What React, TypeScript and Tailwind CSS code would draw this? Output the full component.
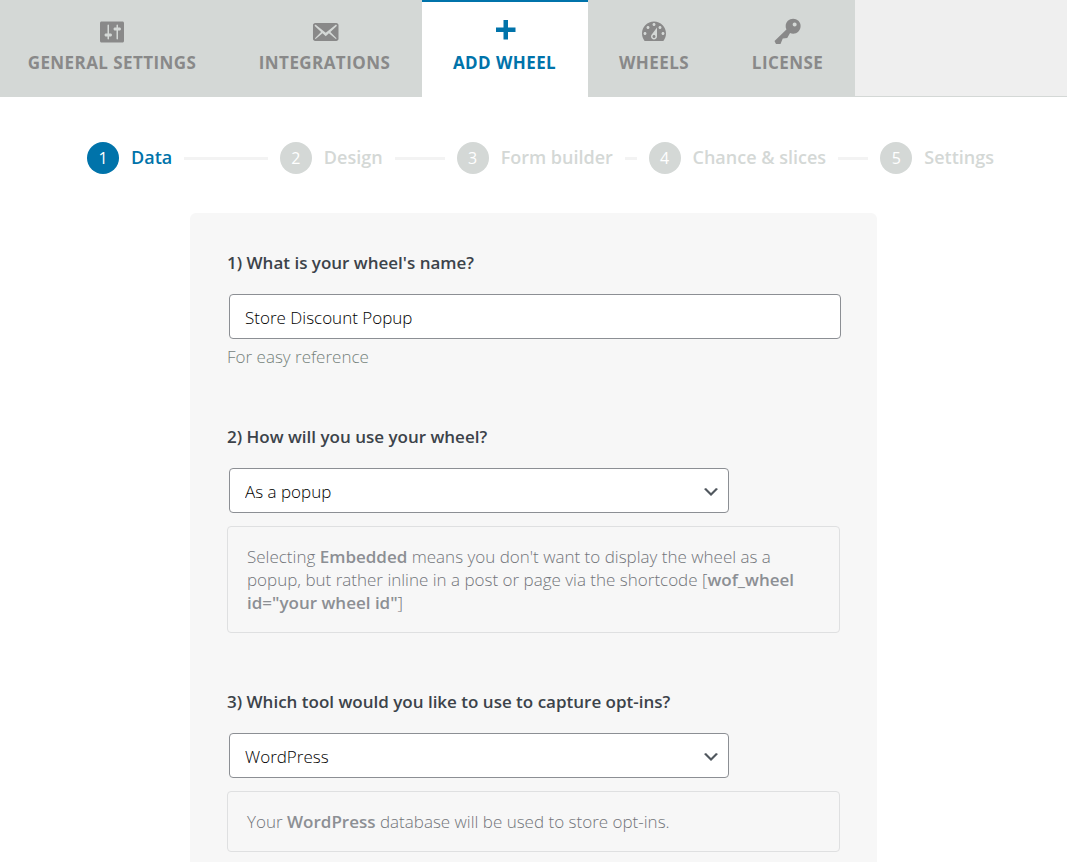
import React, { useState } from 'react';

const icons = {
  settings: 'M18 16V4c0-.55-.45-1-1-1H3c-.55 0-1 .45-1 1v12c0 .55.45 1 1 1h14c.55 0 1-.45 1-1zM8 11h1c.55 0 1 .45 1 1s-.45 1-1 1H8v1.5c0 .28-.22.5-.5.5s-.5-.22-.5-.5V13H6c-.55 0-1-.45-1-1s.45-1 1-1h1V5.5c0-.28.22-.5.5-.5s.5.22.5.5V11zm5-2h-1c-.55 0-1-.45-1-1s.45-1 1-1h1V5.5c0-.28.22-.5.5-.5s.5.22.5.5V7h1c.55 0 1 .45 1 1s-.45 1-1 1h-1v5.5c0 .28-.22.5-.5.5s-.5-.22-.5-.5V9z',
  email: 'M19 14.5v-9c0-.83-.67-1.5-1.5-1.5H3.49c-.83 0-1.5.67-1.5 1.5v9c0 .83.67 1.5 1.5 1.5H17.5c.83 0 1.5-.67 1.5-1.5zm-1.31-9.11c.33.33.15.67-.03.84L13.6 9.95l3.9 4.06c.12.14.2.36.06.51-.13.16-.43.15-.56.05l-4.37-3.73-2.14 1.95-2.13-1.95-4.37 3.73c-.13.1-.43.11-.56-.05-.14-.15-.06-.37.06-.51l3.9-4.06-4.06-3.72c-.18-.17-.36-.51-.03-.84s.67-.17.95.07l6.24 5.04 6.25-5.04c.28-.24.62-.4.95-.07z',
  plus: 'M17 7v3h-5v5H9v-5H4V7h5V2h3v5h5z',
  dashboard: 'M3.76 16h12.48c1.1-1.37 1.76-3.11 1.76-5 0-4.42-3.58-8-8-8s-8 3.58-8 8c0 1.89.66 3.63 1.76 5zM10 4c.55 0 1 .45 1 1s-.45 1-1 1-1-.45-1-1 .45-1 1-1zM6 6c.55 0 1 .45 1 1s-.45 1-1 1-1-.45-1-1 .45-1 1-1zm8 0c.55 0 1 .45 1 1s-.45 1-1 1-1-.45-1-1 .45-1 1-1zm-5.37 5.55L12 7v6c0 1.1-.9 2-2 2s-2-.9-2-2c0-.57.24-1.08.63-1.45zM4 10c.55 0 1 .45 1 1s-.45 1-1 1-1-.45-1-1 .45-1 1-1zm12 0c.55 0 1 .45 1 1s-.45 1-1 1-1-.45-1-1 .45-1 1-1zm-5 3c0-.55-.45-1-1-1s-1 .45-1 1 .45 1 1 1 1-.45 1-1z',
  key: 'M16.95 2.58c1.96 1.95 1.96 5.12 0 7.07-1.51 1.51-3.75 1.84-5.59 1.01l-1.87 3.31-2.99.31L5 18H2l-1-2 7.95-7.69c-.92-1.87-.62-4.18.93-5.73 1.96-1.96 5.12-1.96 7.07 0zm-2.51 3.79c.74 0 1.33-.6 1.33-1.34 0-.73-.59-1.33-1.33-1.33-.73 0-1.33.6-1.33 1.33 0 .74.6 1.34 1.33 1.34z',
};

const tabs = [
  { label: 'General Settings', icon: icons.settings, width: 'w-[228px] pr-1' },
  { label: 'Integrations', icon: icons.email, width: 'w-[194px] pr-px' },
  { label: 'Add Wheel', icon: icons.plus, width: 'w-[166px] pr-px', active: true },
  { label: 'Wheels', icon: icons.dashboard, width: 'w-[133px] pr-px' },
  { label: 'License', icon: icons.key, width: 'w-[134px] pr-px' },
];

const steps = ['Data', 'Design', 'Form builder', 'Chance & slices', 'Settings'];

const TabBar: React.FC = () => (
  <nav className="flex border-b border-[#d4d8d6] bg-[#efefef]">
    {tabs.map(tab => (
      <a
        key={tab.label}
        href="#"
        className={`-mb-px flex h-[97px] shrink-0 flex-col items-center border-t-2 pt-[15px] text-[17px] font-bold uppercase tracking-wide ${tab.width} ${
          tab.active ? 'border-[#0073aa] bg-white text-[#0073aa]' : 'border-[#d4d8d6] bg-[#d4d8d6] text-[#898989]'
        }`}
      >
        <svg viewBox="0 0 20 20" className="size-[30px]" fill="currentColor" aria-hidden="true">
          <path d={tab.icon} />
        </svg>
        <span className="mt-1 leading-6 whitespace-nowrap">{tab.label}</span>
      </a>
    ))}
  </nav>
);

const Steps: React.FC<{ current: number }> = ({ current }) => (
  <ol className="mt-[45px] grid grid-cols-[193fr_177fr_192fr_232fr_113fr] pr-[73px] pl-[87px]">
    {steps.map((step, i) => (
      <li key={step} className="flex items-center">
        <span
          className={`flex size-8 shrink-0 items-center justify-center rounded-full text-base text-white ${
            i === current ? 'bg-[#0073aa]' : 'bg-[#d4d8d6]'
          }`}
        >
          {i + 1}
        </span>
        <span
          className={`ml-3 pb-0.5 text-lg leading-6 font-semibold whitespace-nowrap ${
            i === current ? 'text-[#0073aa]' : 'text-[#d4d8d6]'
          }`}
        >
          {step}
        </span>
        {i < steps.length - 1 && <span className="mx-3 h-[3px] flex-1 bg-[#f3f3f3]" />}
      </li>
    ))}
  </ol>
);

interface SelectProps {
  id: string;
  value: string;
  options: string[];
  onChange: (v: string) => void;
}

const Select: React.FC<SelectProps> = ({ id, value, options, onChange }) => (
  <div className="relative mx-0.5 mt-[19px] max-w-[500px]">
    <select
      id={id}
      value={value}
      onChange={e => onChange(e.target.value)}
      className="block h-[45px] w-full appearance-none rounded border border-[#8c8f94] bg-white px-[15px] pt-0.5 text-[17px] font-light text-black outline-none"
    >
      {options.map(o => (
        <option key={o}>{o}</option>
      ))}
    </select>
    <svg viewBox="0 0 20 20" className="pointer-events-none absolute top-3.5 right-2 size-5" fill="#50575e" aria-hidden="true">
      <path d="M5 6l5 5 5-5 2 1-7 7-7-7 2-1z" />
    </svg>
  </div>
);

const Note: React.FC<{ children: React.ReactNode }> = ({ children }) => (
  <p className="mt-[13px] rounded border border-[#dfe0e1] px-[19px] py-[18px] text-[17px] leading-[23px] font-light text-[#72757a]">
    {children}
  </p>
);

const labelClass = 'block text-[17px] leading-6 font-semibold text-[#3c434a]';

const App: React.FC = () => {
  const [name, setName] = useState('Store Discount Popup');
  const [usage, setUsage] = useState('As a popup');
  const [tool, setTool] = useState('WordPress');

  return (
    <div className="min-h-screen bg-white font-['Open_Sans','Noto_Sans',sans-serif]">
      <TabBar />
      <Steps current={0} />

      <form className="mx-auto mt-[39px] max-w-[687px] rounded-md bg-[#f7f7f7] px-[37px] pt-[38px] pb-9">
        <div>
          <label htmlFor="wheel-name" className={labelClass}>1) What is your wheel's name?</label>
          <div className="-mr-px ml-0.5 mt-[19px]">
            <input
              id="wheel-name"
              type="text"
              value={name}
              onChange={e => setName(e.target.value)}
              className="block h-[45px] w-full rounded border border-[#8c8f94] bg-white px-[15px] pt-px text-[17px] font-light text-black outline-none"
            />
          </div>
          <p className="mt-1.5 text-[17px] leading-6 font-light text-[#75827b]">For easy reference</p>
        </div>

        <div className="mt-14">
          <label htmlFor="wheel-usage" className={labelClass}>2) How will you use your wheel?</label>
          <Select id="wheel-usage" value={usage} options={['As a popup', 'Embedded']} onChange={setUsage} />
          <Note>
            Selecting <b className="font-semibold text-[#8c8f94]">Embedded</b> means you don't want to display the wheel as a popup, but
            rather inline in a post or page via the shortcode [<b className="font-semibold text-[#8c8f94]">wof_wheel id="your wheel id"</b>]
          </Note>
        </div>

        <div className="mt-[57px]">
          <label htmlFor="optin-tool" className={labelClass}>3) Which tool would you like to use to capture opt-ins?</label>
          <Select id="optin-tool" value={tool} options={['WordPress', 'MailChimp', 'Zapier']} onChange={setTool} />
          <Note>
            Your <b className="font-semibold text-[#8c8f94]">WordPress</b> database will be used to store opt-ins.
          </Note>
        </div>
      </form>
    </div>
  );
};

export default App;
